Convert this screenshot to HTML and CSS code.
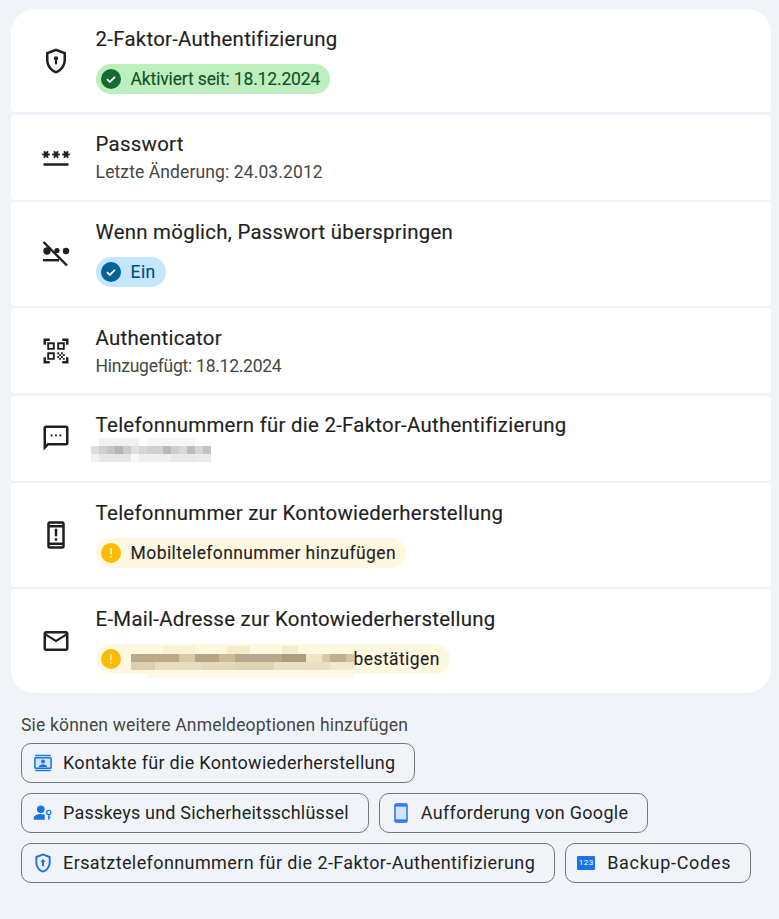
FILE: index.html
```html
<!DOCTYPE html>
<html lang="de">
<head>
<meta charset="utf-8">
<title>2-Faktor-Authentifizierung</title>
<link rel="stylesheet" href="styles.css">
</head>
<body>
<main class="page">
  <section class="list">
    <article class="card card-first">
      <svg class="icon" viewBox="0 0 24 24"><path d="M12 2 4 5v6.09c0 5.05 3.41 9.76 8 10.91 4.59-1.15 8-5.86 8-10.91V5l-8-3zm6 9.09c0 4-2.55 7.7-6 8.83-3.45-1.13-6-4.82-6-8.83v-4.7l6-2.25 6 2.25v4.7z"/><circle cx="12" cy="9.9" r="1.7"/><rect x="11.2" y="10.5" width="1.6" height="4.2"/></svg>
      <div class="body">
        <h2 class="title">2-Faktor-Authentifizierung</h2>
        <div class="chip chip-green">
          <svg class="chip-icon" viewBox="0 0 20 20"><circle class="c-green" cx="10" cy="10" r="10"/><path class="tick" d="M6 10.2l2.8 2.7L14 7.8"/></svg>
          <span>Aktiviert seit: 18.12.2024</span>
        </div>
      </div>
    </article>
    <article class="card card-small">
      <svg class="icon" viewBox="0 0 24 24"><path d="M2 17h20v2H2v-2zm1.15-4.05L4 11.47l.85 1.48 1.3-.75-.85-1.48H7v-1.5H5.3l.85-1.47L4.85 7 4 8.47 3.15 7l-1.3.75.85 1.47H1v1.5h1.7l-.85 1.48 1.3.75zm6.7-.75 1.3.75.85-1.48.85 1.48 1.3-.75-.85-1.48H15v-1.5h-1.7l.85-1.47-1.3-.75L12 8.47 11.15 7l-1.3.75.85 1.47H9v1.5h1.7l-.85 1.48zM23 9.22h-1.7l.85-1.47-1.3-.75L20 8.47 19.15 7l-1.3.75.85 1.47H17v1.5h1.7l-.85 1.48 1.3.75.85-1.48.85 1.48 1.3-.75-.85-1.48H23v-1.5z"/></svg>
      <div class="body">
        <h2 class="title">Passwort</h2>
        <p class="sub sub-wide">Letzte Änderung: 24.03.2012</p>
      </div>
    </article>
    <article class="card">
      <svg class="icon" viewBox="0 0 30 30"><circle cx="6" cy="12" r="3.7"/><circle cx="25" cy="12" r="3.2"/><circle cx="16" cy="11.5" r="2.6"/><rect x="2" y="20" width="16" height="2.4"/><path class="slash" d="M2.5 3 26 26.5"/></svg>
      <div class="body">
        <h2 class="title">Wenn möglich, Passwort überspringen</h2>
        <div class="chip chip-blue">
          <svg class="chip-icon" viewBox="0 0 20 20"><circle class="c-blue" cx="10" cy="10" r="10"/><path class="tick" d="M6 10.2l2.8 2.7L14 7.8"/></svg>
          <span>Ein</span>
        </div>
      </div>
    </article>
    <article class="card card-small">
      <svg class="icon" viewBox="0 0 24 24"><path d="M9.5 6.5v3h-3v-3h3M11 5H5v6h6V5zm-1.5 9.5v3h-3v-3h3M11 13H5v6h6v-6zm6.5-6.5v3h-3v-3h3M19 5h-6v6h6V5zm-6 8h1.5v1.5H13V13zm1.5 1.5H16V16h-1.5v-1.5zM16 13h1.5v1.5H16V13zm-3 3h1.5v1.5H13V16zm1.5 1.5H16V19h-1.5v-1.5zM16 16h1.5v1.5H16V16zm1.5-1.5H19V16h-1.5v-1.5zm0 3H19V19h-1.5v-1.5zM22 7h-2V4h-3V2h5v5zm0 15v-5h-2v3h-3v2h5zM2 22h5v-2H4v-3H2v5zM2 2v5h2V4h3V2H2z"/></svg>
      <div class="body">
        <h2 class="title">Authenticator</h2>
        <p class="sub sub-narrow">Hinzugefügt: 18.12.2024</p>
      </div>
    </article>
    <article class="card card-small">
      <svg class="icon" viewBox="0 0 24 24"><path d="M20 2H4c-1.1 0-1.99.9-1.99 2L2 22l4-4h14c1.1 0 2-.9 2-2V4c0-1.1-.9-2-2-2zm0 14H5.17L4 17.17V4h16v12z"/><rect x="7.7" y="9.2" width="1.5" height="1.5"/><rect x="11.2" y="9.2" width="1.5" height="1.5"/><rect x="14.7" y="9.2" width="1.5" height="1.5"/></svg>
      <div class="body">
        <h2 class="title">Telefonnummern für die 2-Faktor-Authentifizierung</h2>
        <svg class="mosaic-phone" width="120" height="24" viewBox="0 0 15 3" shape-rendering="crispEdges">
          <g fill="#f1f1f1"><rect width="5" height="1" x="1"/><rect width="6" height="1" x="7" fill="#f5f6f7"/></g>
          <rect x="0" y="1" width="1" height="1" fill="#dcdcdc"/><rect x="1" y="1" width="1" height="1" fill="#cfcfcf"/><rect x="2" y="1" width="1" height="1" fill="#c4c4c4"/><rect x="3" y="1" width="1" height="1" fill="#b5b5b5"/><rect x="4" y="1" width="1" height="1" fill="#cbcbcb"/><rect x="5" y="1" width="1" height="1" fill="#e1e1e1"/><rect x="6" y="1" width="1" height="1" fill="#d6d6d6"/><rect x="7" y="1" width="1" height="1" fill="#cfcfcf"/><rect x="8" y="1" width="1" height="1" fill="#d0d0d0"/><rect x="9" y="1" width="1" height="1" fill="#b9b9b9"/><rect x="10" y="1" width="1" height="1" fill="#cdcdcd"/><rect x="11" y="1" width="1" height="1" fill="#d8d8d8"/><rect x="12" y="1" width="1" height="1" fill="#bdbdbd"/><rect x="13" y="1" width="1" height="1" fill="#d5d5d5"/><rect x="14" y="1" width="1" height="1" fill="#c3c3c3"/>
          <rect x="0" y="2" width="1" height="1" fill="#f0f0f0"/><rect x="1" y="2" width="4" height="1" fill="#e6e6e6"/><rect x="5" y="2" width="1" height="1" fill="#f6f7f8"/><rect x="6" y="2" width="4" height="1" fill="#eceef0"/><rect x="10" y="2" width="3" height="1" fill="#e7e8ea"/><rect x="13" y="2" width="2" height="1" fill="#eaeaea"/>
        </svg>
      </div>
    </article>
    <article class="card">
      <svg class="icon" viewBox="0 0 24 24"><path d="M17 1.01 7 1c-1.1 0-2 .9-2 2v18c0 1.1.9 2 2 2h10c1.1 0 2-.9 2-2V3c0-1.1-.9-1.99-2-1.99zM17 21H7v-1h10v1zm0-3H7V6h10v12zM17 4H7V3h10v1zm-6 3h2v6h-2zm0 7.5h2v2h-2z"/></svg>
      <div class="body">
        <h2 class="title">Telefonnummer zur Kontowiederherstellung</h2>
        <div class="chip chip-yellow">
          <svg class="chip-icon" viewBox="0 0 20 20"><circle class="c-yellow" cx="10" cy="10" r="10"/><rect class="mark" x="9.2" y="5" width="1.6" height="6.5"/><rect class="mark" x="9.2" y="13" width="1.6" height="1.8"/></svg>
          <span>Mobiltelefonnummer hinzufügen</span>
        </div>
      </div>
    </article>
    <article class="card card-last">
      <svg class="icon" viewBox="0 0 24 24"><path d="M22 6c0-1.1-.9-2-2-2H4c-1.1 0-2 .9-2 2v12c0 1.1.9 2 2 2h16c1.1 0 2-.9 2-2V6zm-2 0-8 5-8-5h16zm0 12H4V8l8 5 8-5v10z"/></svg>
      <div class="body">
        <h2 class="title">E-Mail-Adresse zur Kontowiederherstellung</h2>
        <div class="chip chip-yellow">
          <svg class="chip-icon" viewBox="0 0 20 20"><circle class="c-yellow" cx="10" cy="10" r="10"/><rect class="mark" x="9.2" y="5" width="1.6" height="6.5"/><rect class="mark" x="9.2" y="13" width="1.6" height="1.8"/></svg>
          <svg class="mosaic-mail" width="223" height="32" viewBox="0 0 28 4" shape-rendering="crispEdges">
            <rect x="12" y="0" width="3" height="1" fill="#f5eccd"/><rect x="4" y="0" width="4" height="1" fill="#faf2d6"/><rect x="19" y="0" width="2" height="1" fill="#f3ead0"/>
            <rect x="0" y="1" width="6" height="1" fill="#bda98a"/><rect x="6" y="1" width="2" height="1" fill="#d8caa4"/><rect x="8" y="1" width="3" height="1" fill="#b5a486"/><rect x="11" y="1" width="2" height="1" fill="#c9ba98"/><rect x="13" y="1" width="6" height="1" fill="#b8a88b"/><rect x="19" y="1" width="3" height="1" fill="#ad9c80"/><rect x="22" y="1" width="2" height="1" fill="#efe6c8"/><rect x="24" y="1" width="1" height="1" fill="#d6c9a8"/><rect x="25" y="1" width="2" height="1" fill="#bfae90"/><rect x="27" y="1" width="1" height="1" fill="#d2c5a5"/>
            <rect x="0" y="2" width="3" height="1" fill="#dccfae"/><rect x="3" y="2" width="6" height="1" fill="#e8ddbd"/><rect x="9" y="2" width="4" height="1" fill="#e4d8b8"/><rect x="13" y="2" width="5" height="1" fill="#e0d4b3"/><rect x="18" y="2" width="7" height="1" fill="#ebe0c1"/><rect x="25" y="2" width="3" height="1" fill="#f2e9cb"/>
            <rect x="2" y="3" width="26" height="1" fill="#fdf8e8"/>
          </svg>
          <span>bestätigen</span>
        </div>
      </div>
    </article>
  </section>

  <p class="hint">Sie können weitere Anmeldeoptionen hinzufügen</p>
  <nav class="actions">
    <a class="action">
      <svg class="action-icon" viewBox="0 0 18 18"><path class="blue" d="M2 1.5h14v1.4H2zM2 15.1h14v1.4H2z"/><rect class="pale" x="1" y="3.6" width="16" height="10.8" rx="1.2"/><rect class="stroke" x="1.7" y="4.3" width="14.6" height="9.4" rx=".8"/><circle class="blue" cx="9" cy="7.6" r="1.8"/><path class="blue" d="M5.2 12.6c0-1.6 2.4-2.5 3.8-2.5s3.8.9 3.8 2.5z"/></svg>
      <span>Kontakte für die Kontowiederherstellung</span>
    </a>
    <a class="action action-tight">
      <svg class="action-icon" viewBox="0 0 18 18"><circle class="blue" cx="7" cy="5.6" r="3.4"/><path class="blue" d="M.6 15v-1.6c0-2.4 3.7-3.6 6.4-3.6 1.2 0 2.5.2 3.6.7v4.5z"/><circle class="stroke-thin" cx="14.2" cy="8.6" r="1.9"/><path class="stroke-thin" d="M14.2 10.5v4.5M14.2 13h1.6"/></svg>
      <span>Passkeys und Sicherheitsschlüssel</span>
    </a>
    <a class="action">
      <svg class="action-icon" viewBox="0 0 18 22"><rect class="pale" x="3" y="2" width="12" height="18" rx="1"/><rect class="stroke-bold" x="3" y="2" width="12" height="18" rx="1.6"/><path class="blue" d="M3 3h12v1.6H3zM3 17.4h12V19H3z"/></svg>
      <span>Aufforderung von Google</span>
    </a>
    <a class="action action-loose">
      <svg class="action-icon" viewBox="1.5 1 21 22"><path class="blue" d="M12 2 4 5v6.09c0 5.05 3.41 9.76 8 10.91 4.59-1.15 8-5.86 8-10.91V5l-8-3zm6 9.09c0 4-2.55 7.7-6 8.83-3.45-1.13-6-4.82-6-8.83v-4.7l6-2.25 6 2.25v4.7z"/><path class="blue" d="M12 7.6 9.3 11h1.7v4.4h2V11h1.7z"/></svg>
      <span>Ersatztelefonnummern für die 2-Faktor-Authentifizierung</span>
    </a>
    <a class="action action-wide">
      <span class="codes">123</span>
      <span>Backup-Codes</span>
    </a>
  </nav>
</main>
</body>
</html>
```

FILE: styles.css
```css
* { box-sizing: border-box; }
html, body { margin: 0; padding: 0; }
body {
  background: #f0f4f9;
  color: #1f1f1f;
  font-family: "Roboto", "Liberation Sans", sans-serif;
  height: 919px;
  overflow: hidden;
}
.page { padding: 9px 8px 0 11px; }
.list { display: flex; flex-direction: column; gap: 2.8px; }
.card {
  background: #fff;
  border-radius: 4px;
  display: flex;
  align-items: center;
  padding: 0 0 0 30px;
  height: 103.2px;
}
.card-small { height: 84.7px; }
.card-first { border-radius: 24px 24px 4px 4px; }
.card-last { border-radius: 4px 4px 24px 24px; }
.icon { width: 30px; height: 30px; flex: none; fill: #1f1f1f; margin-right: 24.6px; }
.icon .slash { fill: none; stroke: #1f1f1f; stroke-width: 2.4; }
.body { flex: 1; min-width: 0; display: flex; flex-direction: column; align-items: flex-start; align-self: flex-start; padding-top: 16.5px; }
.title { margin: 0; font-size: 20.4px; line-height: 26px; font-weight: 400; letter-spacing: .27px; -webkit-text-stroke: .15px #1f1f1f; }
.sub { margin: 2px 0 0; font-size: 17.5px; line-height: 26px; color: #444746; }
.sub-wide { letter-spacing: .11px; }
.sub-narrow { letter-spacing: -.25px; }
.chip {
  margin-top: 12.5px;
  height: 30px;
  border-radius: 15px;
  display: inline-flex;
  align-items: center;
  padding: 0 10px 0 5px;
  font-size: 17.5px;
  letter-spacing: .4px;
  white-space: nowrap;
  -webkit-text-stroke: .12px currentColor;
}
.chip-icon { width: 20px; height: 20px; flex: none; margin-right: 10px; }
.chip-green { background: #bdeebd; color: #0f5223; letter-spacing: -.15px; }
.chip-blue { background: #c2e7ff; color: #004a77; }
.chip-yellow { background: #fff8e1; color: #1f1f1f; }
.c-green { fill: #146c2e; }
.c-blue { fill: #00639b; }
.c-yellow { fill: #ffbb00; }
.tick { fill: none; stroke: #fff; stroke-width: 1.8; }
.mark { fill: #fff3c4; }
.mosaic-phone { display: block; margin: 0 0 0 -5px; }
.mosaic-mail { flex: none; overflow: visible; margin: 6px 0 0 0; }
.hint { margin: 20px 0 6px 10px; font-size: 17.5px; line-height: 24px; color: #444746; letter-spacing: .18px; }
.actions { display: flex; flex-wrap: wrap; gap: 10px; margin-left: 10px; }
.action {
  height: 40px;
  border: 1px solid #747775;
  border-radius: 10px;
  display: inline-flex;
  align-items: center;
  padding: 0 19px 0 11px;
  font-size: 18px;
  letter-spacing: .3px;
  white-space: nowrap;
  color: #1f1f1f;
}
.action-tight { letter-spacing: .2px; }
.action-loose { letter-spacing: .4px; }
.action-wide { letter-spacing: .7px; }
.action-icon { width: 20px; height: 22px; flex: none; margin-right: 10px; }
.blue { fill: #1a73e8; }
.pale { fill: #d2e3fc; }
.stroke { fill: none; stroke: #1a73e8; stroke-width: 1.4; }
.stroke-thin { fill: none; stroke: #1a73e8; stroke-width: 1.2; }
.stroke-bold { fill: none; stroke: #4285f4; stroke-width: 1.8; }
.codes {
  background: #1a73e8;
  color: #fff;
  width: 18px;
  height: 14px;
  border-radius: 1px;
  margin-right: 12px;
  font-size: 8px;
  line-height: 14px;
  text-align: center;
  letter-spacing: .4px;
}
```
